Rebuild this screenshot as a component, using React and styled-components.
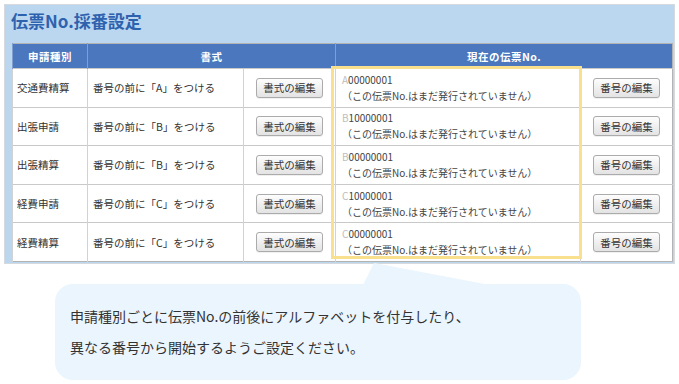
import React from "react";
import styled, { createGlobalStyle } from "styled-components";

const GlobalStyle = createGlobalStyle`
  html, body { margin: 0; padding: 0; background: #fff; }
  body { font-family: "Noto Sans CJK JP", "Noto Sans", sans-serif; }
`;

const Page = styled.div`
  width: 679px;
  height: 384px;
  box-sizing: border-box;
  padding: 4px 0 0 4px;
  overflow: hidden;
`;

const Panel = styled.section`
  width: 671px;
  box-sizing: border-box;
  background: #bbd6ef;
  border: 1px solid #d6d9dd;
  padding: 4px 2px 1px 7px;
`;

const Title = styled.h1`
  margin: 0 0 10px -1px;
  font-family: "Noto Sans CJK JP", sans-serif;
  font-size: 17px;
  line-height: 24px;
  font-weight: 700;
  color: #2f62ae;
`;

const TableWrap = styled.div`
  position: relative;
  width: 660px;
`;

const Table = styled.table`
  width: 660px;
  table-layout: fixed;
  border-collapse: collapse;
  background: #fff;
  border: 1px solid #b3b3b3;
`;

const HeadCell = styled.th`
  height: 24px;
  padding: 0;
  background: #4a77bd;
  color: #fff;
  font-size: 10.5px;
  font-weight: 700;
  text-align: center;
  border-left: 1px solid #7f9fd2;
  letter-spacing: 0.5px;
`;

const Row = styled.tr`
  height: 38.6px;
`;

const Cell = styled.td`
  padding: 0 0 0 ${(p) => p.$pl ?? 4}px;
  border-top: 1px solid #c9c9c9;
  border-left: 1px solid #d2d2d2;
  border-right: ${(p) => (p.$dashed ? "1px dashed #9c9c9c" : "none")};
  font-size: ${(p) => p.$size ?? 10.5}px;
  color: #333;
  text-align: ${(p) => (p.$center ? "center" : "left")};
  vertical-align: middle;
  white-space: nowrap;
`;

const NumLine = styled.div`
  line-height: 16px;
  color: #444;
`;

const Prefix = styled.span`
  color: #bdbdbd;
`;

const EditButton = styled.button`
  width: 67px;
  height: 20px;
  padding: 0;
  font-family: "Noto Sans CJK JP", sans-serif;
  font-size: 10.5px;
  color: #333;
  background: linear-gradient(#fdfdfd, #e3e3e3);
  border: 1px solid #ababab;
  border-radius: 3px;
  box-shadow: 0 1px 0 rgba(0, 0, 0, 0.06);
  cursor: pointer;
`;

const Highlight = styled.div`
  position: absolute;
  left: 319px;
  top: 23px;
  width: 251px;
  height: 193px;
  box-sizing: border-box;
  border: 3px solid #f8e08e;
  pointer-events: none;
`;

const Callout = styled.div`
  position: relative;
  width: 526px;
  height: 96px;
  box-sizing: border-box;
  margin: 20px 0 0 51px;
  padding: 17px 15px 16px;
  background: #ebf5fd;
  border-radius: 18px;
  font-size: 14px;
  line-height: 31px;
  color: #333;
`;

const Tail = styled.svg`
  position: absolute;
  left: 300px;
  top: -21px;
  width: 140px;
  height: 22px;
`;

const rows = [
  { type: "交通費精算", fmt: "A", num: "00000001" },
  { type: "出張申請", fmt: "B", num: "10000001" },
  { type: "出張精算", fmt: "B", num: "00000001" },
  { type: "経費申請", fmt: "C", num: "10000001" },
  { type: "経費精算", fmt: "C", num: "00000001" },
];

export default function App() {
  return (
    <>
      <GlobalStyle />
      <Page>
        <Panel>
          <Title>伝票No.採番設定</Title>
          <TableWrap>
            <Table>
              <colgroup>
                <col style={{ width: 75 }} />
                <col style={{ width: 156 }} />
                <col style={{ width: 92 }} />
                <col style={{ width: 245 }} />
                <col style={{ width: 92 }} />
              </colgroup>
              <thead>
                <tr>
                  <HeadCell>申請種別</HeadCell>
                  <HeadCell colSpan={2}>書式</HeadCell>
                  <HeadCell colSpan={2}>現在の伝票No.</HeadCell>
                </tr>
              </thead>
              <tbody>
                {rows.map((r, i) => (
                  <Row key={i}>
                    <Cell>{r.type}</Cell>
                    <Cell $pl={5} $dashed>
                      番号の前に「{r.fmt}」をつける
                    </Cell>
                    <Cell $pl={0} $center>
                      <EditButton>書式の編集</EditButton>
                    </Cell>
                    <Cell $pl={6} $size={10}>
                      <NumLine>
                        <Prefix>{r.fmt}</Prefix>
                        {r.num}
                      </NumLine>
                      <NumLine>（この伝票No.はまだ発行されていません）</NumLine>
                    </Cell>
                    <Cell $pl={0} $center>
                      <EditButton>番号の編集</EditButton>
                    </Cell>
                  </Row>
                ))}
              </tbody>
            </Table>
            <Highlight />
          </TableWrap>
        </Panel>
        <Callout>
          <Tail viewBox="0 0 140 22" aria-hidden="true">
            <polygon points="19,0 8,22 135,22" fill="#ebf5fd" />
          </Tail>
          申請種別ごとに伝票No.の前後にアルファベットを付与したり、
          <br />
          異なる番号から開始するようご設定ください。
        </Callout>
      </Page>
    </>
  );
}
